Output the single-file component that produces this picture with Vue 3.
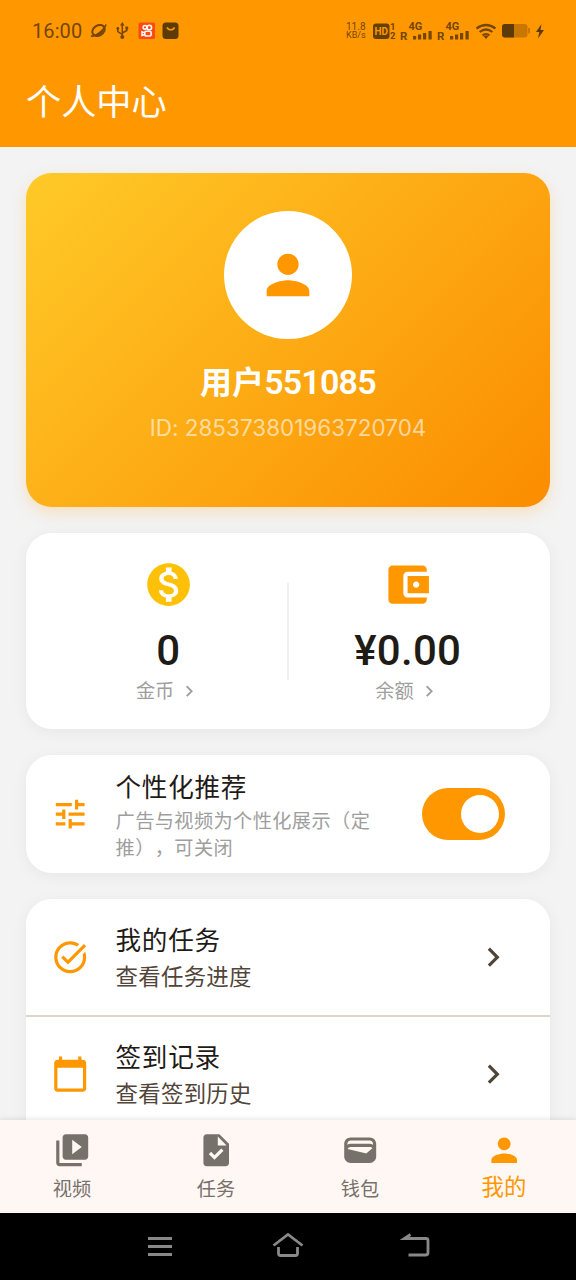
<script setup>
const icons = {
  person: 'M12 12c2.21 0 4-1.79 4-4s-1.79-4-4-4-4 1.79-4 4 1.79 4 4 4zm0 2c-2.67 0-8 1.34-8 4v2h16v-2c0-2.66-5.33-4-8-4z',
  coin: 'M12 2C6.48 2 2 6.48 2 12s4.48 10 10 10 10-4.48 10-10S17.52 2 12 2zm1.41 16.09V20h-2.67v-1.93c-1.71-.36-3.16-1.46-3.27-3.4h1.96c.1 1.05.82 1.87 2.65 1.87 1.96 0 2.4-.98 2.4-1.59 0-.83-.44-1.61-2.67-2.14-2.48-.6-4.18-1.62-4.18-3.67 0-1.72 1.39-2.84 3.11-3.21V4h2.67v1.95c1.86.45 2.79 1.86 2.85 3.39H14.3c-.05-1.11-.64-1.87-2.22-1.87-1.5 0-2.4.68-2.4 1.64 0 .84.65 1.39 2.67 1.91s4.18 1.39 4.18 3.91c-.01 1.83-1.38 2.83-3.12 3.16z',
  balance: 'M21 18v1c0 1.1-.9 2-2 2H5c-1.11 0-2-.9-2-2V5c0-1.1.89-2 2-2h14c1.1 0 2 .9 2 2v1h-9c-1.11 0-2 .9-2 2v8c0 1.1.89 2 2 2h9zm-9-2h10V8H12v8zm4-2.5c-.83 0-1.5-.67-1.5-1.5s.67-1.5 1.5-1.5 1.5.67 1.5 1.5-.67 1.5-1.5 1.5z',
  tune: 'M3 17v2h6v-2H3zM3 5v2h10V5H3zm10 16v-2h8v-2h-8v-2h-2v6h2zM7 9v2H3v2h4v2h2V9H7zm14 4v-2H11v2h10zm-6-4h2V7h4V5h-4V3h-2v6z',
  taskAlt: 'M22 5.18L10.59 16.6l-4.24-4.24 1.41-1.41 2.83 2.83 10-10L22 5.18zm-2.21 5.04c.13.57.21 1.17.21 1.78 0 4.42-3.58 8-8 8s-8-3.58-8-8 3.58-8 8-8c1.58 0 3.04.46 4.28 1.25l1.44-1.44C16.1 2.67 14.13 2 12 2 6.48 2 2 6.48 2 12s4.48 10 10 10 10-4.48 10-10c0-1.19-.22-2.33-.6-3.39l-1.61 1.61z',
  calendar: 'M20 3h-1V1h-2v2H7V1H5v2H4c-1.1 0-2 .9-2 2v16c0 1.1.9 2 2 2h16c1.1 0 2-.9 2-2V5c0-1.1-.9-2-2-2zm0 18H4V8h16v13z',
  chevron: 'M10 6L8.59 7.41 13.17 12l-4.58 4.59L10 18l6-6z',
  video: 'M4 6H2v14c0 1.1.9 2 2 2h14v-2H4V6zm16-4H8c-1.1 0-2 .9-2 2v12c0 1.1.9 2 2 2h12c1.1 0 2-.9 2-2V4c0-1.1-.9-2-2-2zm-8 12.5v-9l6 4.5-6 4.5z',
  task: 'M14 2H6c-1.1 0-1.99.9-1.99 2L4 20c0 1.1.89 2 1.99 2H18c1.1 0 2-.9 2-2V8l-6-6zm-3.06 16L7.4 14.46l1.41-1.41 2.12 2.12 4.24-4.24 1.41 1.41L10.94 18zM13 9V3.5L18.5 9H13z',
  wallet: 'M18 4H6C3.79 4 2 5.79 2 8v8c0 2.21 1.79 4 4 4h12c2.21 0 4-1.79 4-4V8c0-2.21-1.79-4-4-4zm-1.86 9.77c-.24.2-.57.28-.88.2L4.15 11.25C4.45 10.52 5.16 10 6 10h12c.67 0 1.26.34 1.63.84l-3.49 2.93zM6 6h12c1.1 0 2 .9 2 2v.55c-.59-.34-1.27-.55-2-.55H6c-.73 0-1.41.21-2 .55V8c0-1.1.9-2 2-2z',
}
const stats = [
  { icon: 'coin', value: '0', label: '金币' },
  { icon: 'balance', value: '¥0.00', label: '余额' },
]
const rows = [
  { icon: 'taskAlt', title: '我的任务', sub: '查看任务进度' },
  { icon: 'calendar', title: '签到记录', sub: '查看签到历史' },
]
const tabs = [
  { icon: 'video', label: '视频' },
  { icon: 'task', label: '任务' },
  { icon: 'wallet', label: '钱包' },
  { icon: 'person', label: '我的', active: true },
]
</script>

<template>
  <div class="screen">
    <header class="top">
      <div class="status">
        <span class="clock">16:00</span>
        <svg class="status-left" width="92" height="20" viewBox="0 0 92 20">
          <g fill="none" stroke="#744600" stroke-width="2">
            <ellipse cx="9.500" cy="9.500" rx="6.600" ry="5" transform="rotate(-30 9.500 9.500)" />
            <path d="M2 15C6 16 15 9.500 17 3.500" stroke-width="1.600" />
          </g>
          <path d="M4 14.500c4 0 9-4 11.500-9-.5 6-5 11-11.500 9z" fill="#744600" />
          <g transform="translate(1 -0.500)">
            <path d="M32.300 4v12M32.300 14l-4.500-3V8M32.300 12.500l4.500-2.500V7" fill="none" stroke="#744600" stroke-width="1.500" />
            <path d="M32.300 1.500l2.300 3.500H30z" fill="#744600" />
            <circle cx="32.300" cy="16.500" r="2" fill="#744600" />
            <circle cx="27.800" cy="8" r="1.400" fill="#744600" />
            <path d="M35.400 6h2.800v2.800h-2.800z" fill="#744600" />
          </g>
          <rect x="49.500" y="1.500" width="16.500" height="16.500" rx="1.500" fill="#fb4a14" />
          <g fill="none" stroke="#fff" stroke-width="1.500">
            <circle cx="56" cy="6.300" r="1.900" />
            <circle cx="60.300" cy="6.500" r="2.300" />
            <rect x="55.800" y="10.300" width="6.300" height="4.600" rx="1.200" />
            <path d="M55.800 11.900l-2.800-1v3.600l2.800-1" />
          </g>
          <rect x="73.500" y="1.500" width="16" height="16.500" rx="3.500" fill="#5c3b08" />
          <path d="M78 6.300c1.500 3.200 6 3.200 7.500 0" fill="none" stroke="#ff9800" stroke-width="1.600" />
        </svg>
        <div class="status-right">
          <div class="speed"><span>11.8</span><span>KB/s</span></div>
          <svg width="184" height="24" viewBox="0 0 184 24" class="signals">
            <rect x="1" y="4.500" width="16.500" height="15.500" rx="3" fill="#654004" />
            <text x="9.300" y="16" class="hd">HD</text>
            <text x="18" y="11" class="tiny">1</text>
            <text x="18" y="20" class="tiny">2</text>
            <g v-for="x in [0, 37]" :key="x" :transform="`translate(${x} 0)`">
              <text x="28" y="20.500" class="roam">R</text>
              <text x="36.500" y="11" class="gen">4G</text>
              <path d="M41 17h3.200v3.500H41zM46 15.500h3.200v5H46zM51 14h3.200v6.500H51zM56.500 12h3.200v8.500h-3.200z" fill="#744600" />
            </g>
            <g fill="none" stroke="#744600" stroke-width="2.200">
              <path d="M104.500 9.500q9.500-7 19 0" />
              <path d="M107.600 13q6.400-5 12.800 0" />
              <path d="M110.500 16.400q3.500-2.600 7 0" />
            </g>
            <path d="M111.600 17.300q2.400-1.600 4.800 0L114 20z" fill="#744600" />
            <rect x="130" y="5" width="25.500" height="13.500" rx="3" fill="#c87800" />
            <path d="M133 5h9v13.500h-9a3 3 0 0 1-3-3V8a3 3 0 0 1 3-3z" fill="#5c3b08" />
            <path d="M156 9h2v5.500h-2z" fill="#c87800" />
            <path d="M169.500 5l-5.500 8h3.300l-1.300 6.500 6-8.500h-3.500z" fill="#5c3b08" />
          </svg>
        </div>
      </div>
      <h1>个人中心</h1>
    </header>

    <main class="content">
      <section class="card profile">
        <div class="avatar">
          <svg viewBox="0 0 24 24"><path :d="icons.person" /></svg>
        </div>
        <div class="name">用户<span>551085</span></div>
        <div class="uid">ID: 285373801963720704</div>
      </section>

      <section class="card stats">
        <div v-for="s in stats" :key="s.icon" class="stat">
          <svg viewBox="0 0 24 24" class="stat-icon" :class="s.icon"><path :d="icons[s.icon]" /></svg>
          <div class="value">{{ s.value }}</div>
          <div class="label">
            <span>{{ s.label }}</span>
            <svg viewBox="0 0 24 24"><path :d="icons.chevron" /></svg>
          </div>
        </div>
      </section>

      <section class="card prefer">
        <svg viewBox="0 0 24 24" class="lead"><path :d="icons.tune" /></svg>
        <div class="prefer-text">
          <div class="title">个性化推荐</div>
          <div class="note">广告与视频为个性化展示（定<br />推），可关闭</div>
        </div>
        <div class="switch"><i></i></div>
      </section>

      <section class="card list">
        <div v-for="r in rows" :key="r.icon" class="row">
          <svg viewBox="0 0 24 24" class="lead"><path :d="icons[r.icon]" /></svg>
          <div class="row-text">
            <div class="title">{{ r.title }}</div>
            <div class="sub">{{ r.sub }}</div>
          </div>
          <svg viewBox="0 0 24 24" class="go"><path :d="icons.chevron" /></svg>
        </div>
      </section>
    </main>

    <nav class="tabs">
      <div v-for="t in tabs" :key="t.icon" class="tab" :class="{ active: t.active }">
        <svg viewBox="0 0 24 24"><path :d="icons[t.icon]" /></svg>
        <span>{{ t.label }}</span>
      </div>
    </nav>

    <footer class="system">
      <svg viewBox="0 0 32 32"><path d="M4 8.500h24M4 16.500h24M4 24.500h24" /></svg>
      <svg viewBox="0 0 32 32"><path d="M1.500 15.500L16 4.500l14.500 11M6.500 17v6.500q0 2 2 2h15q2 0 2-2V17" /></svg>
      <svg viewBox="0 0 32 32"><path d="M10.500 4.500L4.500 8.500H26q2 0 2 2V22.500q0 2.500-2.500 2.500H8.500" /></svg>
    </footer>
  </div>
</template>

<style>
body {
  background: #f3f3f3;
}
</style>

<style scoped>
.screen {
  width: 576px;
  height: 1280px;
  display: flex;
  flex-direction: column;
  overflow: hidden;
  background: #f3f3f3;
  color: #1f1b16;
  font-family: Roboto, "Noto Sans CJK SC", sans-serif;
}
svg {
  display: block;
  flex: none;
}
.top {
  flex: none;
  height: 147px;
  background: #ff9800;
}
.status {
  height: 61px;
  padding: 0 28px 0 32px;
  display: flex;
  align-items: center;
  color: #744600;
}
.clock {
  font-size: 20px;
  line-height: 24px;
  width: 57px;
  letter-spacing: 0.1px;
  white-space: nowrap;
}
.status-right {
  margin-left: auto;
  display: flex;
  align-items: center;
}
.speed {
  width: 26px;
  display: flex;
  flex-direction: column;
  font-size: 10px;
  line-height: 9px;
  white-space: nowrap;
}
.speed span:last-child {
  font-size: 9px;
}
.signals {
  margin-right: -8px;
}
.hd {
  font: 700 10px Roboto, sans-serif;
  fill: #ff9800;
  text-anchor: middle;
}
.tiny {
  font: 700 9.500px Roboto, sans-serif;
  fill: #744600;
}
.roam {
  font: 700 11.500px Roboto, sans-serif;
  fill: #744600;
}
.gen {
  font: 700 11px Roboto, sans-serif;
  fill: #744600;
}
h1 {
  margin: 13px 0 0 26px;
  font: 400 35.200px/51px "Noto Sans CJK SC", sans-serif;
  color: #fff;
}
.content {
  flex: 1;
  min-height: 0;
  padding: 26px 25.600px 0;
  display: flex;
  flex-direction: column;
  gap: 25.600px;
  overflow: hidden;
}
.card {
  flex: none;
  border-radius: 25.600px;
  background: #fff;
  box-shadow: 0 3px 16px rgba(0, 0, 0, 0.05);
}
.profile {
  height: 334px;
  box-sizing: border-box;
  padding-top: 38px;
  display: flex;
  flex-direction: column;
  align-items: center;
  background: linear-gradient(135deg, #ffca28, #fb8c00);
  box-shadow: 0 6px 16px rgba(255, 152, 0, 0.2);
  color: #fff;
}
.avatar {
  width: 128px;
  height: 128px;
  border-radius: 50%;
  background: #fff;
  display: grid;
  place-items: center;
}
.avatar svg {
  width: 64px;
  fill: #ff9800;
}
.name {
  margin-top: 23px;
  font-size: 32px;
  line-height: 40px;
  font-weight: 700;
  white-space: nowrap;
}
.name span {
  font-size: 34px;
  font-weight: 600;
  letter-spacing: -0.800px;
}
.uid {
  margin-top: 9px;
  font: 400 22.400px/32px Inter, sans-serif;
  letter-spacing: 0.050px;
  color: rgba(255, 255, 255, 0.6);
  white-space: nowrap;
}
.stats {
  position: relative;
  height: 196.500px;
  box-sizing: border-box;
  padding: 26.400px 23px 0;
  display: grid;
  grid-template-columns: 1fr 1fr;
}
.stats::after {
  content: "";
  position: absolute;
  left: 50%;
  top: 50px;
  width: 1.600px;
  height: 97px;
  margin-left: -0.800px;
  background: #eee;
}
.stat {
  display: flex;
  flex-direction: column;
  align-items: center;
}
.stat-icon {
  width: 51.200px;
  fill: #ff9800;
}
.coin {
  fill: #ffc107;
}
.value {
  margin-top: 17px;
  font-size: 42px;
  line-height: 48px;
  font-weight: 500;
  letter-spacing: 0.300px;
  white-space: nowrap;
}
.label {
  margin-top: 3px;
  display: flex;
  align-items: center;
  gap: 4px;
  font-size: 19.200px;
  line-height: 28px;
  color: #9e9e9e;
}
.label svg {
  width: 22.400px;
  margin-top: -2px;
  fill: #9e9e9e;
}
.prefer {
  height: 118.500px;
  display: flex;
  align-items: center;
}
.lead {
  width: 38.400px;
  margin-left: 25.600px;
  fill: #ff9800;
}
.prefer-text,
.row-text {
  margin-left: 26px;
  flex: 1;
  white-space: nowrap;
}
.prefer-text {
  padding-top: 5px;
}
.row-text {
  padding-top: 4px;
}
.title {
  font-size: 25.600px;
  line-height: 37px;
  letter-spacing: 0.700px;
}
.note {
  padding-top: 1px;
  font-size: 19.200px;
  line-height: 27px;
  letter-spacing: 0.400px;
  text-spacing-trim: space-all;
  font-kerning: none;
  font-feature-settings: "chws" 0, "halt" 0;
  color: #9e9e9e;
}
.switch {
  width: 83.200px;
  height: 51.200px;
  margin-right: 45px;
  border-radius: 26px;
  background: #ff9800;
  display: flex;
  align-items: center;
  justify-content: flex-end;
}
.switch i {
  width: 38.400px;
  height: 38.400px;
  margin-right: 6.400px;
  border-radius: 50%;
  background: #fff;
}
.row {
  height: 116px;
  box-sizing: border-box;
  display: flex;
  align-items: center;
}
.row + .row {
  height: 116px;
  border-top: 2px solid #ddd5cc;
}
.sub {
  font-size: 22.400px;
  line-height: 35px;
  letter-spacing: 0.300px;
  color: #51453a;
}
.go {
  width: 38.400px;
  margin-right: 38.400px;
  fill: #51453a;
}
.list {
  height: 260px;
}
.tabs {
  position: relative;
  flex: none;
  height: 93.500px;
  display: grid;
  grid-template-columns: repeat(4, 1fr);
  background: #fff7f3;
  box-shadow: 0 -1px 5px rgba(0, 0, 0, 0.1);
}
.tab {
  padding-top: 11.500px;
  display: flex;
  flex-direction: column;
  align-items: center;
  font-size: 19.200px;
  line-height: 28px;
  color: #77716b;
}
.tab svg {
  width: 38.400px;
  fill: #77716b;
}
.tab span {
  margin-top: 7px;
}
.tab.active {
  font-size: 22.400px;
  color: #ff9800;
}
.tab.active svg {
  fill: #ff9800;
}
.tab.active span {
  margin-top: 4px;
}
.system {
  position: relative;
  flex: none;
  height: 67px;
  box-sizing: border-box;
  padding-top: 17px;
  display: flex;
  justify-content: center;
  gap: 96px;
  background: #000;
}
.system svg {
  width: 32px;
  height: 32px;
  fill: none;
  stroke: #888;
  stroke-width: 2.800;
}
</style>
